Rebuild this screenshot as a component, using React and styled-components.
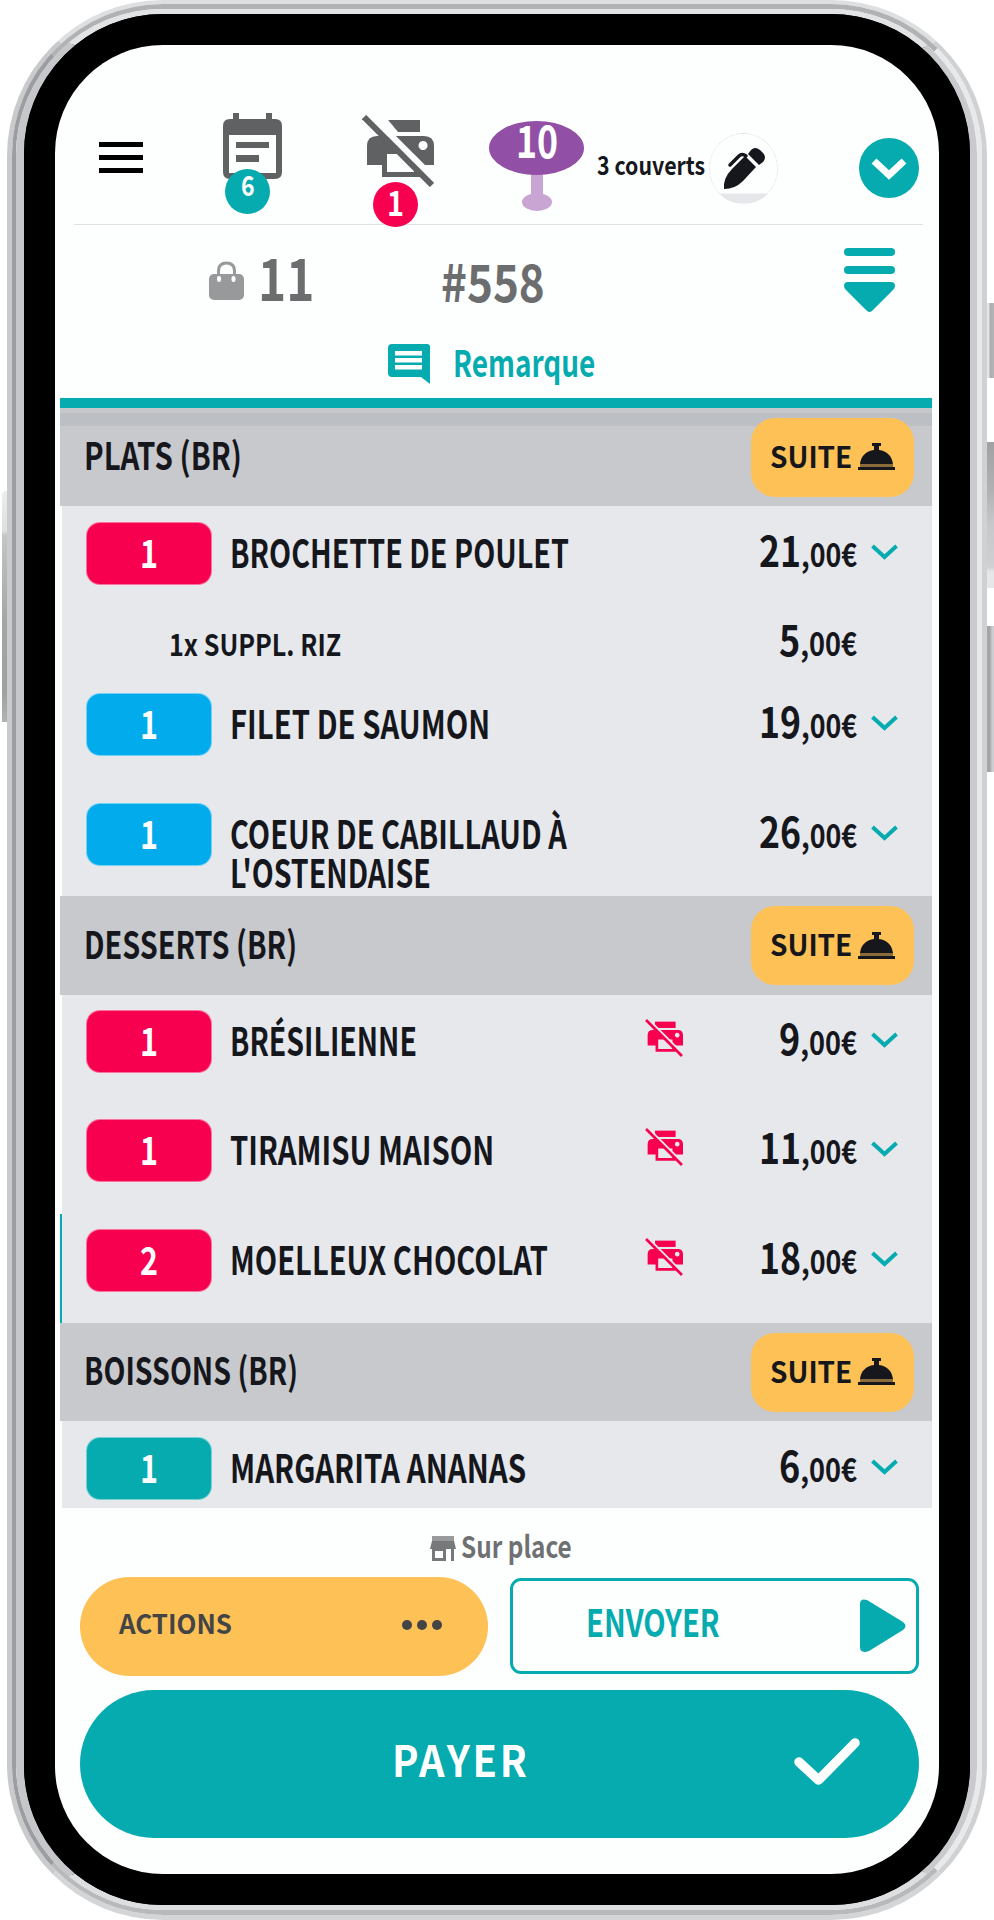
import React, { useLayoutEffect, useRef, useState } from "react";
import styled, { createGlobalStyle } from "styled-components";

const teal = "#05abae";
const pink = "#f6004f";
const blue = "#02abec";
const amber = "#fdc156";

const GlobalStyle = createGlobalStyle`
  * {
    box-sizing: border-box;
  }
  body {
    margin: 0;
    background: white;
    color: #15171c;
    font-family: "Noto Sans CJK SC", "Noto Sans", sans-serif;
    overflow: hidden;
  }
  svg {
    display: block;
    flex: none;
  }
`;

const Stage = styled.div`
  position: relative;
  width: 994px;
  height: 1920px;
  padding: 0 7px;
`;

const SideButton = styled.div`
  position: absolute;
  ${(props) => (props.$left ? "left: 2px;" : "right: 0;")}
  top: ${(props) => props.$top}px;
  width: ${(props) => (props.$left ? 6 : 8)}px;
  height: ${(props) => props.$height}px;
  border-radius: ${(props) => (props.$left ? "4px 0 0 0" : "0")};
  background: ${(props) => props.$fill};
`;

const Rim = styled.div`
  position: relative;
  width: 980px;
  height: 1920px;
  border-style: solid;
  border-width: 4px 5px 5px;
  border-color: #dddfe0 #cfd1d3 #d3d5d6 #c9cacc;
  border-radius: 156px;
`;

const RimGroove = styled.div`
  height: 100%;
  border-style: solid;
  border-width: 5px 5px 5px 4px;
  border-color: #b0b2b4 #e8e9eb #b7b9bb #9c9da0;
  border-radius: 151px;
`;

const RimInner = styled.div`
  height: 100%;
  border-style: solid;
  border-width: 5px 7px 5px 8px;
  border-color: #e1e3e5 #c9cacd #dcdee0 #c6c7ca;
  border-radius: 146px;
  background: black;
`;

const Bezel = styled.div`
  height: 100%;
  border: 31px solid black;
  border-radius: 139px;
  background: black;
`;

const Screen = styled.div`
  height: 100%;
  padding: 0 7px 0 5px;
  border-radius: 108px;
  background: #fdfefe;
  overflow: hidden;
`;

const FitBox = styled.span`
  display: block;
  flex: none;
  width: ${(props) => props.$width}px;
  white-space: nowrap;
`;

const FitInner = styled.span`
  display: inline-block;
  padding-bottom: 0.14em;
  transform-origin: 0 50%;
`;

// condenses its text to the given width
function Fit({ width, children }) {
  const ref = useRef(null);
  const [scale, setScale] = useState(1);

  useLayoutEffect(() => {
    setScale(width / ref.current.offsetWidth);
  }, [width, children]);

  return (
    <FitBox $width={width}>
      <FitInner ref={ref} style={{ transform: `scaleX(${scale})` }}>
        {children}
      </FitInner>
    </FitBox>
  );
}

const TopBar = styled.header`
  display: flex;
  align-items: flex-start;
  height: 180px;
  margin: 0 9px 0 14px;
  padding: 68px 0 0 25px;
  border-bottom: 1px solid #dfe2e3;
`;

const MenuButton = styled.div`
  display: flex;
  flex-direction: column;
  gap: 8px;
  width: 44px;
  margin-top: 29px;
`;

const MenuLine = styled.span`
  height: 5px;
  background: black;
`;

const IconSlot = styled.div`
  position: relative;
  margin-left: ${(props) => props.$gap}px;
  padding-top: ${(props) => props.$drop || 0}px;
`;

const Badge = styled.span`
  position: absolute;
  left: ${(props) => props.$x}px;
  top: ${(props) => props.$y}px;
  display: flex;
  align-items: center;
  justify-content: center;
  width: 45px;
  height: 45px;
  border-radius: 50%;
  background: ${(props) => props.$color};
  color: white;
  font-size: ${(props) => props.$size}px;
  font-weight: 700;
  line-height: 1;
  padding-bottom: ${(props) => props.$lift}px;
`;

const TableNumber = styled.span`
  position: absolute;
  left: 27px;
  top: 1px;
  color: white;
  font-size: 45px;
  font-weight: 700;
  line-height: 50px;
`;

const Covers = styled.div`
  margin: 36px 0 0 13px;
  font-size: 25.5px;
  font-weight: 700;
  line-height: 30px;
`;

const PenButton = styled.div`
  display: flex;
  align-items: center;
  justify-content: center;
  width: 69px;
  height: 71px;
  margin: 20px 0 0 4px;
  border: 1px dotted #dcdde2;
  border-radius: 50%;
  background: linear-gradient(#fdfefe 59px, #e6e7ea 60px);
`;

const ExpandButton = styled.div`
  display: flex;
  align-items: center;
  justify-content: center;
  width: 60px;
  height: 60px;
  margin: 25px 0 0 81px;
  border-radius: 50%;
  background: ${teal};
`;

const OrderInfo = styled.div`
  display: flex;
  align-items: flex-start;
  height: 109px;
  padding: 22px 37px 0 149px;
  color: #6c6d6f;
`;

const Guests = styled.div`
  margin: -3px 0 0 14px;
  font-size: 58px;
  font-weight: 700;
  line-height: 64px;
`;

const OrderNumber = styled.div`
  flex: 1;
  margin: 1px 0 0 127px;
  font-size: 52px;
  font-weight: 700;
  line-height: 64px;
`;

const BagSlot = styled.div`
  margin-top: 14px;
`;

const Remark = styled.div`
  display: flex;
  align-items: center;
  gap: 22px;
  height: 64px;
  padding: 0 0 4px 328px;
  color: ${teal};
  font-size: 37px;
  font-weight: 700;
  line-height: 50px;
`;

const OrderList = styled.main`
  border-top: 10px solid ${teal};
`;

const CourseHeader = styled.div`
  display: flex;
  align-items: center;
  justify-content: space-between;
  height: ${(props) => props.$height}px;
  padding: 0 18px 0 24px;
  background: ${(props) =>
    props.$first
      ? "linear-gradient(#c6c8cc 5px, #bcc0c5 5px, #bcc0c5 18px, #c8c9cd 18px)"
      : "#c8c9cd"};
  font-size: 38px;
  font-weight: 700;
  line-height: 56px;
`;

const SuiteButton = styled.div`
  display: flex;
  align-items: center;
  gap: 6px;
  width: 163px;
  height: 79px;
  padding-left: 19px;
  border-radius: 24px;
  background: ${amber};
  font-size: 29px;
  line-height: 40px;
`;

const Row = styled.div`
  display: flex;
  height: ${(props) => props.$height}px;
  padding: ${(props) => props.$top}px 34px 0 24px;
  border-left: 2px solid ${(props) => (props.$active ? teal : "#fdfefe")};
  background: #e7e8ec;
`;

const Quantity = styled.div`
  display: flex;
  align-items: center;
  justify-content: center;
  width: 126px;
  height: 63px;
  border: 1px solid rgba(255, 255, 255, 0.45);
  border-radius: 14px;
  background: ${(props) => props.$color};
  color: white;
  font-size: 39px;
  font-weight: 700;
  line-height: 50px;
`;

const Name = styled.div`
  flex: 1;
  padding: 12px 0 0 18px;
  font-size: 38.5px;
  font-weight: 700;
  line-height: 34px;
`;

const PrintSlot = styled.div`
  width: 38px;
  margin: 9px 0 0;
`;

const Price = styled.div`
  display: flex;
  justify-content: flex-end;
  width: 174px;
  margin-top: ${(props) => props.$top}px;
  font-size: 32px;
  font-weight: 700;
  line-height: 60px;
`;

const Units = styled.span`
  font-size: 42.5px;
`;

const ChevronSlot = styled.div`
  width: 27px;
  margin: 22px 0 0 14px;
`;

const Supplement = styled.div`
  display: flex;
  height: 61px;
  padding: 0 75px 0 107px;
  border-left: 2px solid #fdfefe;
  background: #e7e8ec;
`;

const SupplementName = styled.div`
  flex: 1;
  padding-top: 4px;
  font-size: 30px;
  font-weight: 700;
  line-height: 46px;
`;

const Service = styled.div`
  display: flex;
  align-items: center;
  gap: 5px;
  height: 69px;
  padding: 10px 0 0 370px;
  color: #6f7072;
  font-size: 30px;
  font-weight: 700;
  line-height: 40px;
`;

const Buttons = styled.footer`
  display: grid;
  grid-template-columns: 408px 409px;
  column-gap: 22px;
  row-gap: 14px;
  padding: 0 0 0 19.500px;
`;

const ActionsButton = styled.div`
  display: flex;
  align-items: center;
  justify-content: space-between;
  height: 99px;
  padding: 0 46px 3px 39px;
  border-radius: 50px;
  background: ${amber};
  color: #424446;
  font-size: 27px;
  font-weight: 700;
  line-height: 40px;
`;

const SendButton = styled.div`
  display: flex;
  align-items: center;
  justify-content: space-between;
  height: 96px;
  margin-top: 1px;
  padding: 0 10px 0 73px;
  border: 3px solid ${teal};
  border-radius: 11px;
  color: ${teal};
  font-size: 38px;
  font-weight: 700;
  line-height: 38px;
`;

const SendLabel = styled.div`
  padding-bottom: 5px;
`;

const PayButton = styled.div`
  grid-column: 1 / 3;
  display: flex;
  align-items: center;
  justify-content: space-between;
  height: 148px;
  padding: 0 58px 5px 312px;
  border-radius: 74px;
  background: ${teal};
  color: white;
  font-size: 43px;
  font-weight: 700;
  letter-spacing: 3px;
  line-height: 60px;
`;

function CalendarIcon() {
  return (
    <svg width="59" height="66" viewBox="0 0 59 66">
      <path
        fill="#606163"
        fillRule="evenodd"
        d="M10 0h6v6h27V0h6v6h3q7 0 7 7v46q0 7-7 7H7q-7 0-7-7V13q0-7 7-7h3zM6 22v38h47V22z"
      />
      <path fill="#606163" d="M13 29h33v6H13zM13 42h23v7H13z" />
    </svg>
  );
}

function PrinterOffIcon({ color, size, background, gap, strike }) {
  // the cleared line sits right against the upper edge of the strike
  const shift = ((gap + strike) / 2) * 1.41 - 0.5;
  return (
    <svg width={size} height={size} viewBox="0 0 72 72">
      <path fill={color} d="M19 5h39v12H19z" />
      <path
        fill={color}
        fillRule="evenodd"
        d="M15 21H62q10 0 10 10V50H58V62H20V50H5V31q0-10 10-10zM25 39V57H52V39zM61 26a4.500 4.500 0 1 0 .1 0z"
      />
      {gap > 5 && <path fill={background} d="M0 0h22L36 17H17z" />}
      <path
        stroke={background}
        strokeWidth={gap}
        d={`M0 ${-shift}L76 ${76 - shift}`}
      />
      <path stroke={color} strokeWidth={strike} d="M2 2L70 70" />
    </svg>
  );
}

function TableIcon() {
  return (
    <svg width="95" height="91" viewBox="0 0 95 91">
      <path fill="#c8a5d3" d="M42 50h12v24H42z" />
      <ellipse cx="48" cy="81" rx="15" ry="9" fill="#c8a5d3" />
      <ellipse cx="47.500" cy="27" rx="47.500" ry="27" fill="#9150a5" />
    </svg>
  );
}

function PenIcon() {
  return (
    <svg width="42" height="42" viewBox="0 0 42 42">
      <g fill="#15171c">
        <path d="M1 41q-1-11 8-20L22 8l11 11-13 14Q12 41 1 41z" />
        <path d="M25 6l3-4q4-4 9 0l3 3q4 4 0 9l-4 3z" />
      </g>
      <path
        fill="none"
        stroke="#15171c"
        strokeWidth="3.500"
        strokeLinecap="round"
        d="M7 17L16 8q3-3 7 0"
      />
    </svg>
  );
}

function BagIcon() {
  return (
    <svg width="35" height="40" viewBox="0 0 35 40">
      <rect y="13" width="35" height="26" rx="5" fill="#98999b" />
      <path
        fill="none"
        stroke="#98999b"
        strokeWidth="3"
        d="M9.500 16V10q0-8 8-8t8 8v6"
      />
      <rect x="8" y="15" width="4" height="6" rx="2" fill="white" />
      <rect x="22.500" y="15" width="4" height="6" rx="2" fill="white" />
    </svg>
  );
}

function MenuDownIcon() {
  return (
    <svg width="51" height="66" viewBox="0 0 51 66" fill={teal}>
      <rect width="51" height="8" rx="4" y="1" />
      <rect width="51" height="8" rx="4" y="19" />
      <path d="M4 35h43q4 0 4 4 0 2-2 4L29 63q-3.500 4-7 0L2 43q-2-2-2-4 0-4 4-4z" />
    </svg>
  );
}

function CommentIcon() {
  return (
    <svg width="43" height="42" viewBox="0 0 43 42">
      <path
        fill={teal}
        d="M4 1h35q3 0 3 3v37l-9-7H4q-4 0-4-4V5q0-4 4-4z"
      />
      <path fill="#fdfefe" d="M7 8h27v4.500H7zM7 15h27v4.500H7zM7 22h27v4.500H7z" />
    </svg>
  );
}

function BellIcon() {
  return (
    <svg width="37" height="30" viewBox="0 0 37 30" fill="#15171c">
      <path d="M14 1h9v3h-2v4c8 1 13 6 14 14H2C3 14 8 9 16 8V4h-2z" />
      <path d="M2 22h33v3H2z" opacity="0.5" />
      <path d="M0 25h37v3H0z" />
    </svg>
  );
}

function Chevron() {
  return (
    <svg width="27" height="17" viewBox="0 0 27 17">
      <path fill="none" stroke={teal} strokeWidth="4" d="M1.500 2L13.500 13L25.500 2" />
    </svg>
  );
}

function ShopIcon() {
  return (
    <svg width="26" height="26" viewBox="0 0 26 26" fill="#77787a">
      <path d="M2 1h22v13H2z" opacity="0.75" />
      <path d="M2 6h22l2 8H0z" />
      <path fillRule="evenodd" d="M2 13h14v13H2zM5 16v7h8v-7zM21 13h3v13h-3z" />
    </svg>
  );
}

function DotsIcon() {
  return (
    <svg width="40" height="10" viewBox="0 0 40 10" fill="#424446">
      <circle cx="5" cy="5" r="5" />
      <circle cx="20" cy="5" r="5" />
      <circle cx="35" cy="5" r="5" />
    </svg>
  );
}

function PlayIcon() {
  return (
    <svg width="46" height="54" viewBox="0 0 46 54">
      <path
        fill={teal}
        d="M0 5Q0-1 7 1L43 23q5 4 0 8L9 52q-9 3-9-4z"
      />
    </svg>
  );
}

function CheckIcon() {
  return (
    <svg width="68" height="50" viewBox="0 0 68 50">
      <path
        fill="none"
        stroke="white"
        strokeWidth="9.500"
        strokeLinecap="round"
        strokeLinejoin="round"
        d="M6 25L25.500 43L62 6"
      />
    </svg>
  );
}

const courses = [
  {
    title: "PLATS (BR)",
    width: 158,
    height: 98,
    items: [
      {
        qty: 1,
        color: pink,
        lines: [["BROCHETTE DE POULET", 339]],
        units: "21",
        height: 110,
        top: 16,
        extra: { name: "1x SUPPL. RIZ", width: 172, units: "5" },
      },
      { qty: 1, color: blue, lines: [["FILET DE SAUMON", 260]], units: "19", height: 110, top: 16 },
      {
        qty: 1,
        color: blue,
        lines: [["COEUR DE CABILLAUD À", 337], ["L'OSTENDAISE", 201]],
        units: "26",
        height: 109,
        top: 16,
      },
    ],
  },
  {
    title: "DESSERTS (BR)",
    width: 213,
    height: 99,
    items: [
      { qty: 1, color: pink, lines: [["BRÉSILIENNE", 187]], units: "9", off: true, height: 109, top: 15 },
      { qty: 1, color: pink, lines: [["TIRAMISU MAISON", 264]], units: "11", off: true, height: 110, top: 15 },
      {
        qty: 2,
        color: pink,
        lines: [["MOELLEUX CHOCOLAT", 318]],
        units: "18",
        off: true,
        active: true,
        height: 109,
        top: 15,
      },
    ],
  },
  {
    title: "BOISSONS (BR)",
    width: 214,
    height: 98,
    items: [
      { qty: 1, color: teal, lines: [["MARGARITA ANANAS", 296]], units: "6", height: 87, top: 16 },
    ],
  },
];

function Amount({ units, top }) {
  return (
    <Price $top={top}>
      <Fit width={units.length > 1 ? 98 : 78}>
        <Units>{units}</Units>,00€
      </Fit>
    </Price>
  );
}

function Item({ item }) {
  return (
    <>
      <Row $height={item.height} $top={item.top} $active={item.active}>
        <Quantity $color={item.color}>
          <Fit width={18}>{item.qty}</Fit>
        </Quantity>
        <Name>
          {item.lines.map(([text, width]) => (
            <Fit key={text} width={width}>
              {text}
            </Fit>
          ))}
        </Name>
        {item.off && (
          <PrintSlot>
            <PrinterOffIcon color={pink} size={38} background="#e7e8ec" gap={4} strike={5} />
          </PrintSlot>
        )}
        <Amount units={item.units} top={-3} />
        <ChevronSlot>
          <Chevron />
        </ChevronSlot>
      </Row>
      {item.extra && (
        <Supplement>
          <SupplementName>
            <Fit width={item.extra.width}>{item.extra.name}</Fit>
          </SupplementName>
          <Amount units={item.extra.units} top={-8} />
        </Supplement>
      )}
    </>
  );
}

function App() {
  return (
    <Stage>
      <GlobalStyle />
      <SideButton
        $left
        $top={491}
        $height={231}
        $fill="linear-gradient(#eceded 0, #dedfdf 40px, #c4c5c7 44px, #a3a5a7 130px, #9fa0a2 200px, #b0b1b3)"
      />
      <SideButton $top={303} $height={75} $fill="linear-gradient(90deg, #e3e5e6 3px, #a9abad 4px, #b4b6b8)" />
      <SideButton
        $top={442}
        $height={146}
        $fill="linear-gradient(#9fa1a3 0, #b0b2b4 50px, #c6c7ca 80px, #cfd0d3 125px, #e6e7e9 130px)"
      />
      <SideButton $top={626} $height={146} $fill="linear-gradient(90deg, #a3a5a7 4px, #cccdd0 6px)" />

      <Rim>
        <RimGroove>
          <RimInner>
            <Bezel>
              <Screen>
                <TopBar>
                  <MenuButton>
                    <MenuLine />
                    <MenuLine />
                    <MenuLine />
                  </MenuButton>
                  <IconSlot $gap={80}>
                    <CalendarIcon />
                    <Badge $x={2} $y={56} $color={teal} $size={28} $lift={12}>
                      <Fit width={14}>6</Fit>
                    </Badge>
                  </IconSlot>
                  <IconSlot $gap={80} $drop={2}>
                    <PrinterOffIcon color="#606163" size={72} background="#fdfefe" gap={6.5} strike={6} />
                    <Badge $x={11} $y={69} $color={pink} $size={34} $lift={0}>
                      <Fit width={17}>1</Fit>
                    </Badge>
                  </IconSlot>
                  <IconSlot $gap={55} $drop={8}>
                    <TableIcon />
                    <TableNumber>
                      <Fit width={42}>10</Fit>
                    </TableNumber>
                  </IconSlot>
                  <Covers>
                    <Fit width={108}>3 couverts</Fit>
                  </Covers>
                  <PenButton>
                    <PenIcon />
                  </PenButton>
                  <ExpandButton>
                    <svg width="36" height="24" viewBox="0 0 36 24">
                      <path fill="none" stroke="white" strokeWidth="7" d="M3 5L18 19L33 5" />
                    </svg>
                  </ExpandButton>
                </TopBar>
                <OrderInfo>
                  <BagSlot>
                    <BagIcon />
                  </BagSlot>
                  <Guests>
                    <Fit width={56}>11</Fit>
                  </Guests>
                  <OrderNumber>
                    <Fit width={104}>#558</Fit>
                  </OrderNumber>
                  <MenuDownIcon />
                </OrderInfo>
                <Remark>
                  <CommentIcon />
                  <Fit width={142}>Remarque</Fit>
                </Remark>
                <OrderList>
                  {courses.map((course, index) => (
                    <React.Fragment key={course.title}>
                      <CourseHeader $height={course.height} $first={index === 0}>
                        <Fit width={course.width}>{course.title}</Fit>
                        <SuiteButton>
                          <Fit width={82}>SUITE</Fit>
                          <BellIcon />
                        </SuiteButton>
                      </CourseHeader>
                      {course.items.map((item) => (
                        <Item key={item.lines[0][0]} item={item} />
                      ))}
                    </React.Fragment>
                  ))}
                </OrderList>
                <Service>
                  <ShopIcon />
                  <Fit width={111}>Sur place</Fit>
                </Service>
                <Buttons>
                  <ActionsButton>
                    <Fit width={113}>ACTIONS</Fit>
                    <DotsIcon />
                  </ActionsButton>
                  <SendButton>
                    <SendLabel>
                      <Fit width={134}>ENVOYER</Fit>
                    </SendLabel>
                    <PlayIcon />
                  </SendButton>
                  <PayButton>
                    <Fit width={138}>PAYER</Fit>
                    <CheckIcon />
                  </PayButton>
                </Buttons>
              </Screen>
            </Bezel>
          </RimInner>
        </RimGroove>
      </Rim>
    </Stage>
  );
}

export default App;
